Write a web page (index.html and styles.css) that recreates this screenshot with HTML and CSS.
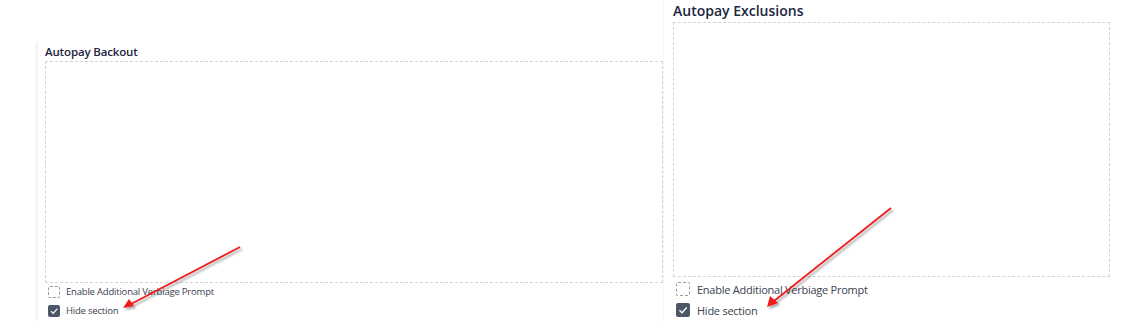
FILE: index.html
```html
<!DOCTYPE html>
<html lang="en">
<head>
    <meta charset="UTF-8">
    <meta name="viewport" content="width=device-width, initial-scale=1.0">
    <title>Autopay sections</title>
    <link rel="stylesheet" href="styles.css">
</head>
<body>
    <div class="page">
        <!-- Autopay Backout -->
        <section class="panel panel-small">
            <h3 class="panel-title">Autopay Backout</h3>
            <div class="drop-box"></div>
            <label class="option">
                <span class="check"></span>
                <span>Enable Additional Verbiage Prompt</span>
            </label>
            <label class="option">
                <span class="check checked">
                    <svg viewBox="0 0 12 12"><path d="M3 6.2 L5.1 8.3 L9.2 3.9" /></svg>
                </span>
                <span>Hide section</span>
            </label>
        </section>

        <!-- Autopay Exclusions -->
        <section class="panel panel-large">
            <h3 class="panel-title">Autopay Exclusions</h3>
            <div class="drop-box"></div>
            <label class="option">
                <span class="check"></span>
                <span>Enable Additional Verbiage Prompt</span>
            </label>
            <label class="option">
                <span class="check checked">
                    <svg viewBox="0 0 12 12"><path d="M3 6.2 L5.1 8.3 L9.2 3.9" /></svg>
                </span>
                <span>Hide section</span>
            </label>
        </section>

        <!-- Annotation arrows -->
        <svg class="arrows" width="1140" height="321" viewBox="0 0 1140 321">
            <defs>
                <filter id="shadow" x="-20%" y="-20%" width="140%" height="140%">
                    <feGaussianBlur in="SourceAlpha" stdDeviation="1.2" />
                    <feOffset dx="2" dy="2" result="blur" />
                    <feComponentTransfer><feFuncA type="linear" slope="0.35" /></feComponentTransfer>
                    <feMerge><feMergeNode /><feMergeNode in="SourceGraphic" /></feMerge>
                </filter>
            </defs>
            <g filter="url(#shadow)">
                <line x1="240" y1="247" x2="131" y2="304" stroke="#ee1c1c" stroke-width="1.8" />
                <polygon points="123,308 129,299 134,306" fill="#ee1c1c" />
                <line x1="891" y1="208" x2="774" y2="301" stroke="#ee1c1c" stroke-width="1.8" />
                <polygon points="767,307 770,296 778,303" fill="#ee1c1c" />
            </g>
        </svg>
    </div>
</body>
</html>
```

FILE: styles.css
```css
body {
    margin: 0;
    font-family: "Open Sans", "Noto Sans", sans-serif;
    background: #fff;
    color: #333;
}
.page {
    position: relative;
    display: flex;
    align-items: flex-start;
    width: 1140px;
    height: 321px;
    overflow: hidden;
}
.panel {
    box-sizing: border-box;
}
.panel-title {
    margin: 0;
    font-weight: 600;
    color: #1c2540;
}
.drop-box {
    border: 1px dashed #d4d4d4;
    box-sizing: border-box;
}
.option {
    display: flex;
    align-items: center;
    color: #3b4150;
}
.check {
    box-sizing: border-box;
    border: 1px dashed #9a9a9a;
    border-radius: 2px;
    display: flex;
    align-items: center;
    justify-content: center;
    flex-shrink: 0;
}
.check.checked {
    border: none;
    background: #4e5669;
}
.check svg {
    width: 100%;
    height: 100%;
}
.check path {
    fill: none;
    stroke: #fff;
    stroke-width: 1.2;
}

/* left, smaller section */
.panel-small {
    margin: 42px 0 0 35px;
    width: 628px;
    border-left: 3px solid #f5f5f5;
    padding-left: 7px;
}
.panel-small .panel-title {
    font-size: 11.5px;
    letter-spacing: -0.15px;
    line-height: 19px;
}
.panel-small .drop-box {
    height: 222px;
    margin-bottom: 2px;
}
.panel-small .option {
    height: 13px;
    font-size: 9.5px;
    letter-spacing: -0.2px;
    gap: 6px;
    margin-left: 3px;
    margin-bottom: 6px;
}
.panel-small .check {
    width: 12px;
    height: 12px;
}

/* right, larger section */
.panel-large {
    width: 447px;
    border-left: 1px solid #f5f5f5;
    padding-left: 9px;
    height: 321px;
}
.panel-large .panel-title {
    font-size: 14px;
    line-height: 22px;
}
.panel-large .drop-box {
    height: 255px;
    margin-bottom: 5px;
}
.panel-large .option {
    height: 14px;
    font-size: 11px;
    letter-spacing: -0.25px;
    gap: 7px;
    margin-left: 3px;
    margin-bottom: 7px;
}
.panel-large .check {
    width: 14px;
    height: 14px;
}

.arrows {
    position: absolute;
    left: 0;
    top: 0;
    pointer-events: none;
}
```
